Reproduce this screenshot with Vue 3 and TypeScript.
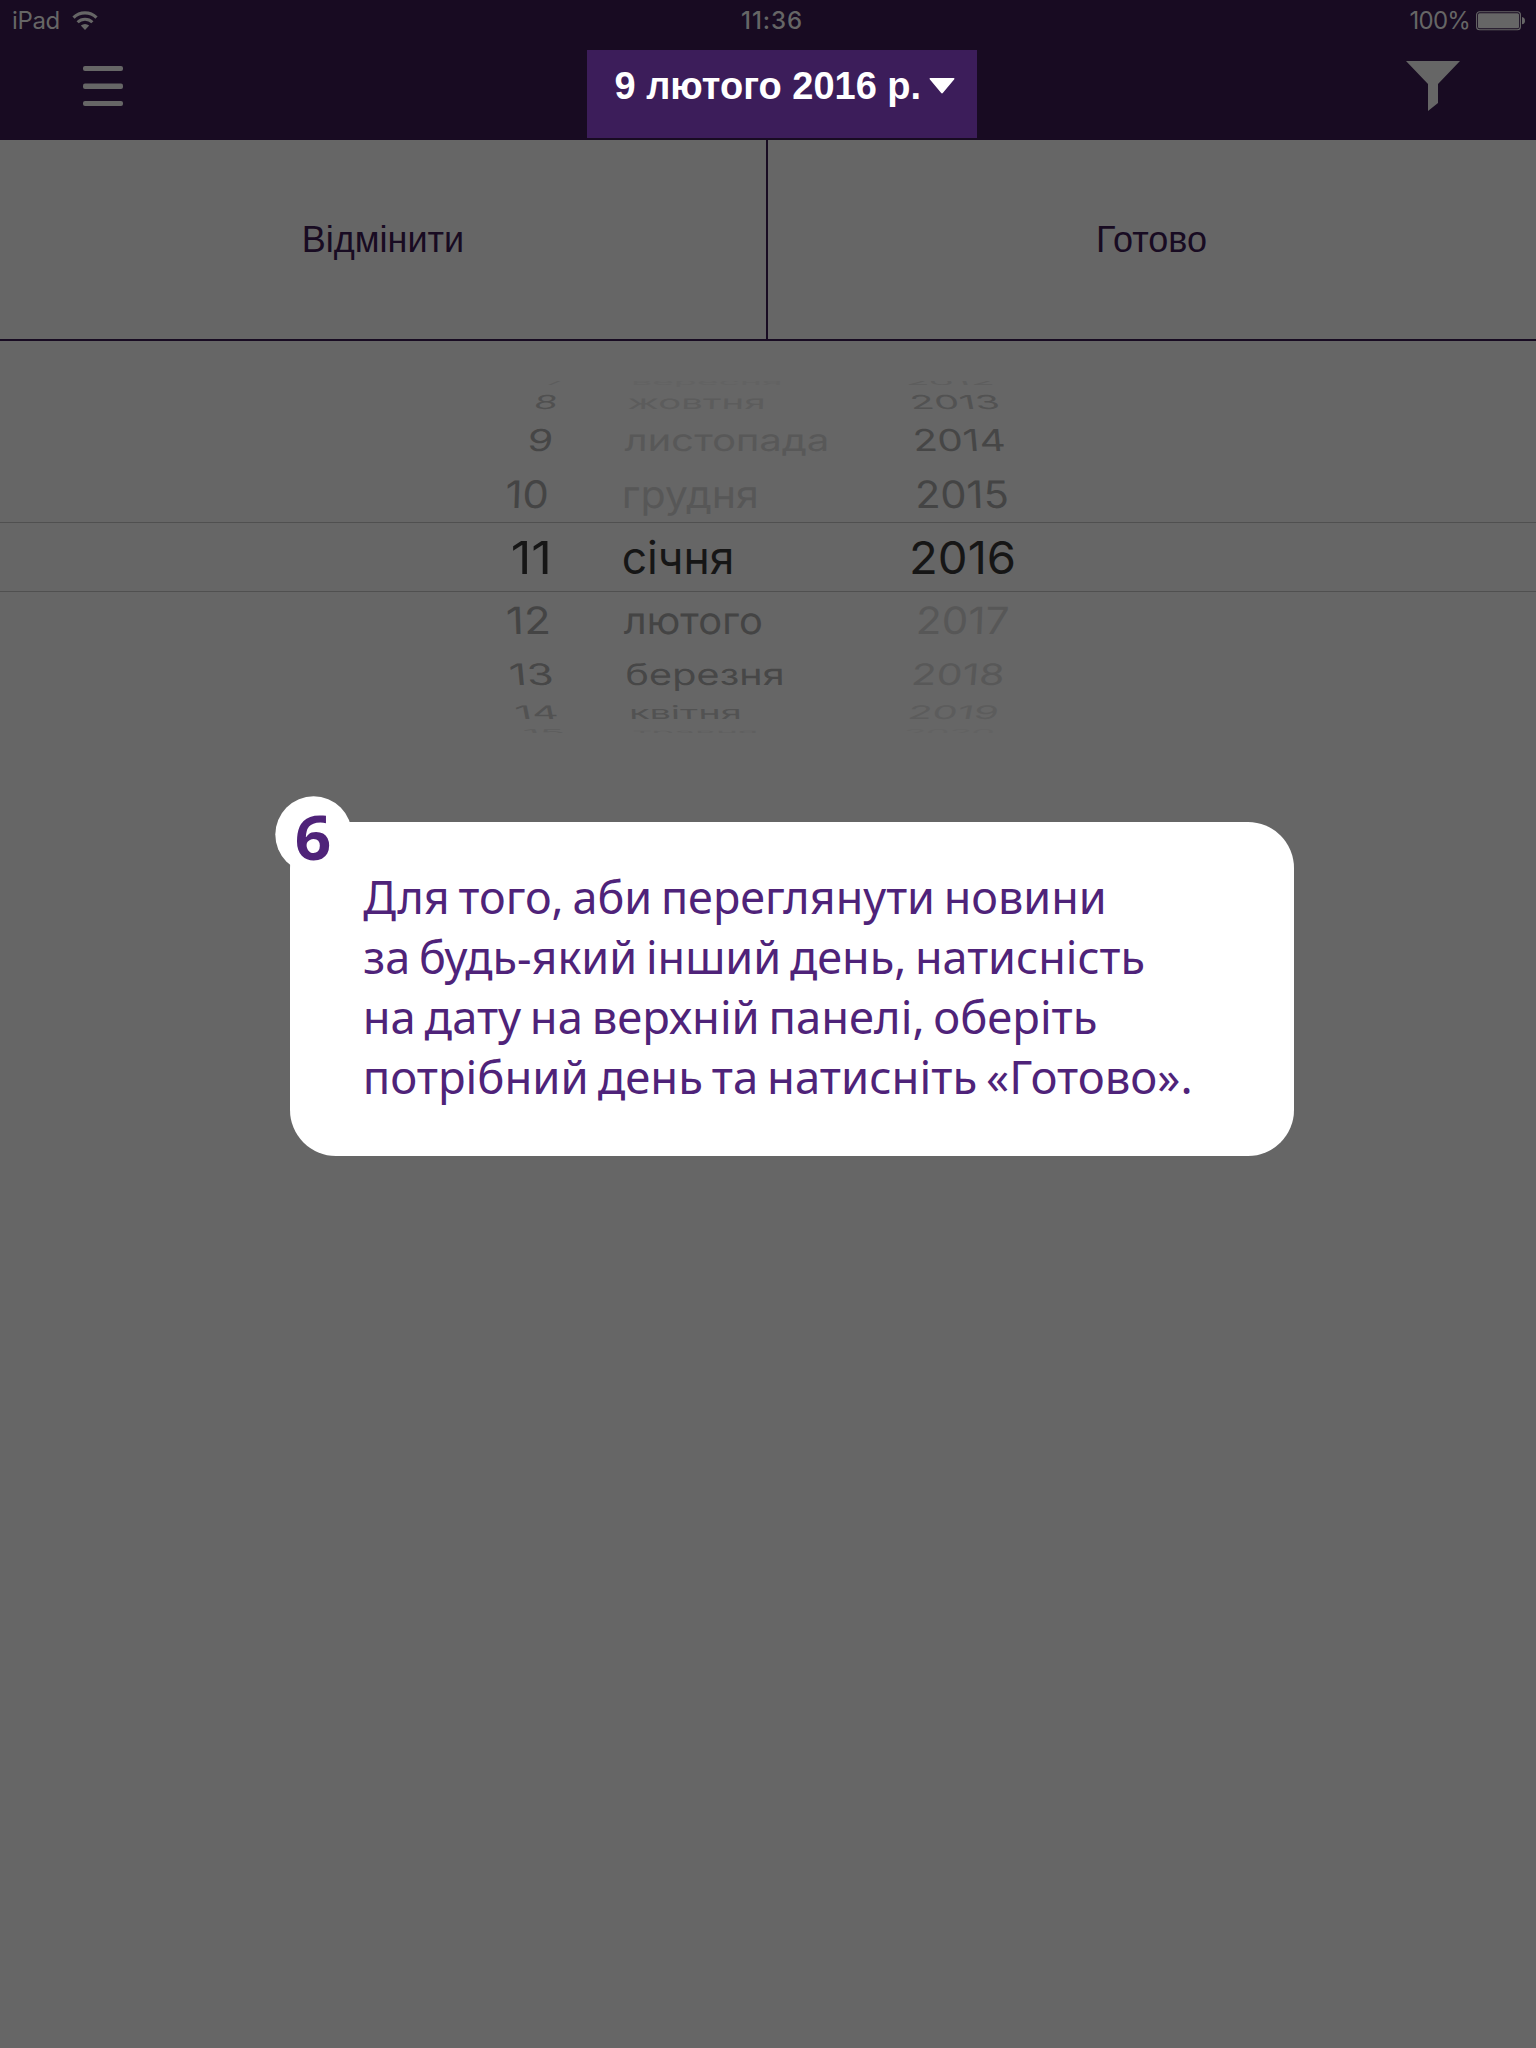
<script setup lang="ts">
type Align = 'day' | 'month' | 'year'

interface Label {
  text: string
  left: number
  right: number
  color: string
}

interface WheelRow {
  baseline: number
  cap: number
  lean: number
  cells: Record<Align, Label>
}

const WHEEL_TOP = 381
const WHEEL_FONT = 46
const WHEEL_CAP = WHEEL_FONT * 0.727
const wheelFamily = 'Inter, "Noto Sans", sans-serif'
const cardFamily = '"Noto Sans", "Open Sans", sans-serif'

const ctx = document.createElement('canvas').getContext('2d')!

/* Horizontal scale and offset that make the ink of a text span left..right. */
function fit(text: string, font: string, left: number, right: number, wordSpacing = '0px') {
  ctx.font = font
  ctx.wordSpacing = wordSpacing
  const m = ctx.measureText(text)
  const scale = (right - left) / (m.actualBoundingBoxRight + m.actualBoundingBoxLeft)
  return { scale, x: left + m.actualBoundingBoxLeft * scale }
}

function label(text: string, left: number, right: number, color: string): Label {
  return { text, left, right, color }
}

function row(baseline: number, cap: number, lean: number, day: Label, month: Label, year: Label): WheelRow {
  return { baseline, cap, lean, cells: { day, month, year } }
}

const rows: WheelRow[] = [
  row(385, 6, 0.4, label('7', 547.1, 562.9, '#5d5d5d'), label('вересня', 633.6, 780, '#626262'), label('2012', 906.8, 991.8, '#5d5d5d')),
  row(409, 14, 0.2, label('8', 535.7, 556.4, '#505050'), label('жовтня', 628.6, 762.9, '#5c5c5c'), label('2013', 912.1, 997.9, '#525252')),
  row(451, 22, 0.09, label('9', 529.3, 551.4, '#464646'), label('листопада', 624.6, 827.1, '#585858'), label('2014', 915, 1004.3, '#464646')),
  row(508, 27.5, 0.035, label('10', 507.1, 547.1, '#444444'), label('грудня', 624.6, 755.7, '#575757'), label('2015', 917.5, 1007.1, '#444444')),
  row(574, 33, 0, label('11', 512.9, 547.9, '#161616'), label('січня', 623.6, 731, '#161616'), label('2016', 912.1, 1013.6, '#161616')),
  row(633.5, 27.3, -0.035, label('12', 507.9, 547.9, '#444444'), label('лютого', 623.6, 761.4, '#444444'), label('2017', 918.6, 1007.5, '#575757')),
  row(685, 21.5, -0.09, label('13', 510.7, 551.4, '#474747'), label('березня', 627.1, 781.8, '#474747'), label('2018', 913.9, 1002.9, '#585858')),
  row(719, 13.5, -0.2, label('14', 516.4, 557.1, '#525252'), label('квітня', 631.4, 738.9, '#525252'), label('2019', 910.4, 997.1, '#5c5c5c')),
  row(735, 5.7, -0.4, label('15', 524.6, 563.6, '#5d5d5d'), label('травня', 633.6, 755.7, '#5f5f5f'), label('2020', 905.7, 993.6, '#626262')),
]

const leanFactor: Record<Align, number> = { day: -1, month: -0.15, year: 1 }

const wheel = rows.flatMap((r) =>
  (Object.keys(r.cells) as Align[]).map((key) => {
    const c = r.cells[key]
    const k = r.lean * leanFactor[key]
    const spread = Math.abs(k) * r.cap * 0.15
    const f = fit(c.text, `${WHEEL_FONT}px ${wheelFamily}`, c.left + spread, c.right - spread)
    const sy = r.cap / WHEEL_CAP
    return {
      text: c.text,
      color: c.color,
      transform: `matrix(${f.scale} 0 ${k * sy} ${sy} ${f.x + (k * r.cap) / 2} ${r.baseline - WHEEL_TOP})`,
    }
  }),
)

const message = [
  { text: 'Для того, аби переглянути новини', left: 363.3, right: 1103.6, baseline: 914 },
  { text: 'за будь-який інший день, натисність', left: 364.3, right: 1143.2, baseline: 974 },
  { text: 'на дату на верхній панелі, оберіть', left: 365.7, right: 1095.7, baseline: 1034 },
  { text: 'потрібний день та натисніть «Готово».', left: 365.7, right: 1190.7, baseline: 1094 },
].map((line) => {
  const f = fit(line.text, `46px ${cardFamily}`, line.left - 290, line.right - 290, '-3px')
  return { text: line.text, transform: `matrix(${f.scale} 0 0 1 ${f.x} ${line.baseline - 822})` }
})

const badge = fit('6', '700 60px "Noto Sans"', 22, 55)
const badgeTransform = `matrix(${badge.scale} 0 0 1 ${badge.x} 63.5)`
</script>

<template>
  <main class="screen">
    <header class="top">
      <div class="status">
        <div class="carrier">
          <span>iPad</span>
          <svg class="wifi" width="26" height="20" viewBox="0 0 26 20">
            <path d="M1.5 6.6A16.5 16.5 0 0 1 24.5 6.6" fill="none" stroke="#666" stroke-width="3.2" />
            <path d="M5.6 11.2A10.6 10.6 0 0 1 20.4 11.2" fill="none" stroke="#666" stroke-width="3" />
            <path d="M13 19L8.8 14.6Q13 11.2 17.2 14.6Z" fill="#666" />
          </svg>
        </div>
        <span class="time">11:36</span>
        <div class="power">
          <span>100%</span>
          <svg width="50" height="20" viewBox="0 0 50 20">
            <rect x="0.6" y="0.7" width="43.8" height="18" rx="3" fill="none" stroke="#666" stroke-width="1.1" />
            <rect x="2" y="2.2" width="41" height="15" rx="1.5" fill="#666" />
            <path d="M46 6Q49 6.6 49 9.7T46 13.2Z" fill="#666" />
          </svg>
        </div>
      </div>
      <nav class="bar">
        <svg class="menu" width="40" height="40" viewBox="0 0 40 40" fill="#666">
          <rect width="40" height="5" rx="2" />
          <rect y="17.4" width="40" height="5.5" rx="2" />
          <rect y="35" width="40" height="5" rx="2" />
        </svg>
        <div class="date">
          <span>9 лютого 2016 р.</span>
          <svg width="26" height="16" viewBox="0 0 26 16">
            <path d="M1.2 0H24.8Q26 .3 25.3 1.3L14 14.8Q13 16 12 14.8L.7 1.3Q0 .3 1.2 0Z" fill="#fff" />
          </svg>
        </div>
        <svg class="filter" width="54" height="50" viewBox="0 0 54 50">
          <path d="M0 0H54L32 23V42L22 50V23Z" fill="#666" />
        </svg>
      </nav>
    </header>

    <div class="actions">
      <div class="action cancel">Відмінити</div>
      <div class="action done">Готово</div>
    </div>

    <svg class="wheel" width="1536" height="352" viewBox="0 0 1536 352">
      <rect y="141" width="1536" height="1" fill="#505050" />
      <rect y="210" width="1536" height="1" fill="#505050" />
      <text v-for="item in wheel" :key="item.text" :transform="item.transform" :fill="item.color">{{ item.text }}</text>
    </svg>

    <section class="card">
      <svg class="message" width="1004" height="334" viewBox="0 0 1004 334">
        <text v-for="line in message" :key="line.text" :transform="line.transform">{{ line.text }}</text>
      </svg>
      <svg class="badge" width="78" height="78" viewBox="0 0 78 78">
        <circle cx="38.6" cy="38.6" r="38.3" fill="#fff" />
        <text :transform="badgeTransform">6</text>
      </svg>
    </section>
  </main>
</template>

<style>
body {
  margin: 0;
  background: #666;
}
</style>

<style scoped>
.screen {
  width: 1536px;
  height: 2048px;
  overflow: hidden;
  background: #666;
}
.top {
  height: 140px;
  background: #180b22;
}
.status {
  display: grid;
  grid-template-columns: 1fr auto 1fr;
  align-items: center;
  height: 41px;
  box-sizing: border-box;
  padding: 0 10px 0 12px;
  color: #666;
  font: 24px/40px Inter, sans-serif;
}
.carrier,
.power {
  display: flex;
  align-items: center;
}
.carrier {
  gap: 12px;
  letter-spacing: -0.35px;
}
.time {
  font-weight: 500;
  letter-spacing: 0.9px;
  padding-left: 6px;
}
.power {
  justify-content: flex-end;
  gap: 6px;
  letter-spacing: -0.8px;
}
.bar {
  display: flex;
  justify-content: space-between;
  align-items: flex-start;
  padding: 9px 76px 0 83px;
}
.menu {
  margin-top: 16px;
}
.filter {
  margin-top: 11px;
}
.date {
  display: flex;
  justify-content: space-between;
  box-sizing: border-box;
  width: 390px;
  height: 88px;
  padding: 0 22px 0 28px;
  margin-left: 34px;
  background: #3c1d5a;
  color: #fff;
  font: bold 38px/73px "Liberation Sans", Arial, sans-serif;
  white-space: nowrap;
}
.date svg {
  margin-top: 28px;
}
.actions {
  display: flex;
  height: 199px;
  border-bottom: 2px solid #180b22;
  color: #180b22;
  font: 36px/200px "Liberation Sans", Arial, sans-serif;
  text-align: center;
}
.action {
  flex: 1;
}
.cancel {
  flex: 0 0 768px;
  box-sizing: border-box;
  border-right: 2px solid #180b22;
}
.done {
  padding-right: 1px;
}
.wheel {
  display: block;
  margin-top: 40px;
  overflow: hidden;
  font: 46px Inter, "Noto Sans", sans-serif;
}
.card {
  position: relative;
  width: 1004px;
  height: 334px;
  margin: 89px 0 0 290px;
  border-radius: 46px;
  background: #fff;
  fill: #4f2379;
}
.message {
  display: block;
  font: 46px "Noto Sans", "Open Sans", sans-serif;
  word-spacing: -3px;
}
.badge {
  position: absolute;
  left: -15px;
  top: -26px;
  font: 700 60px "Noto Sans", sans-serif;
}
</style>
